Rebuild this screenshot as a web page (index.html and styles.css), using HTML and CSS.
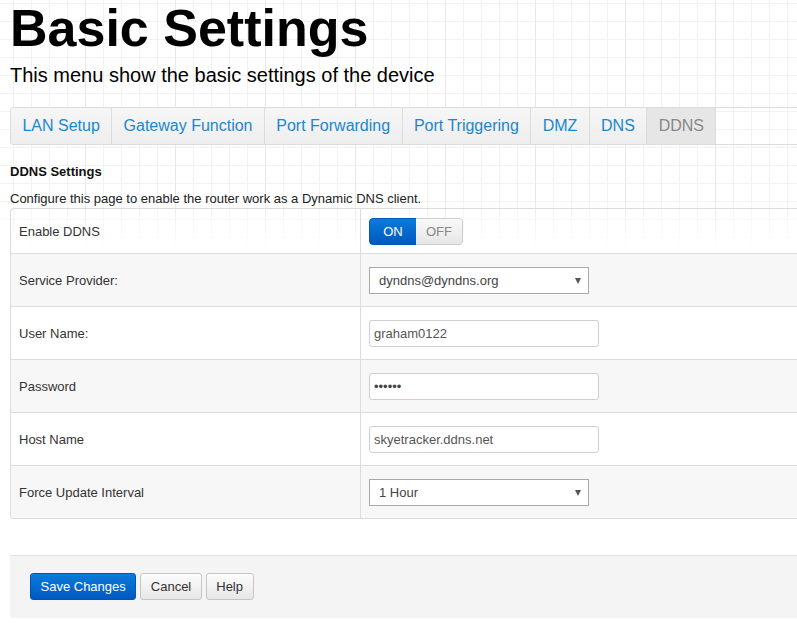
FILE: index.html
```html
<!DOCTYPE html>
<html lang="en">
<head>
<meta charset="utf-8">
<title>Basic Settings</title>
<link rel="stylesheet" href="styles.css">
</head>
<body>
<div class="page">
  <h1 class="title">Basic Settings</h1>
  <p class="subtitle">This menu show the basic settings of the device</p>
  <ul class="tabs">
    <li class="tab"><a class="tab-link" href="#">LAN Setup</a></li>
    <li class="tab"><a class="tab-link" href="#">Gateway Function</a></li>
    <li class="tab"><a class="tab-link" href="#">Port Forwarding</a></li>
    <li class="tab"><a class="tab-link" href="#">Port Triggering</a></li>
    <li class="tab"><a class="tab-link" href="#">DMZ</a></li>
    <li class="tab"><a class="tab-link" href="#">DNS</a></li>
    <li class="tab active"><a class="tab-link" href="#">DDNS</a></li>
  </ul>
  <h2 class="section-title">DDNS Settings</h2>
  <p class="section-desc">Configure this page to enable the router work as a Dynamic DNS client.</p>
  <div class="form-table">
    <div class="row first">
      <div class="label">Enable DDNS</div>
      <div class="control">
        <div class="switch"><span class="switch-on">ON</span><span class="switch-off">OFF</span></div>
      </div>
    </div>
    <div class="row alt">
      <div class="label">Service Provider:</div>
      <div class="control">
        <div class="select"><select class="select-box"><option>dyndns@dyndns.org</option></select></div>
      </div>
    </div>
    <div class="row">
      <div class="label">User Name:</div>
      <div class="control"><input class="input" type="text" value="graham0122"></div>
    </div>
    <div class="row alt">
      <div class="label">Password</div>
      <div class="control"><input class="input input-pass" type="text" value="••••••"></div>
    </div>
    <div class="row">
      <div class="label">Host Name</div>
      <div class="control"><input class="input" type="text" value="skyetracker.ddns.net"></div>
    </div>
    <div class="row alt">
      <div class="label">Force Update Interval</div>
      <div class="control">
        <div class="select"><select class="select-box"><option>1 Hour</option></select></div>
      </div>
    </div>
  </div>
  <div class="actions">
    <button class="btn btn-primary" type="button">Save Changes</button>
    <button class="btn" type="button">Cancel</button>
    <button class="btn" type="button">Help</button>
  </div>
</div>
</body>
</html>
```
FILE: styles.css
```css
html {
  margin: 0;
  min-height: 100%;
  background-color: #fff;
  background-image:
    linear-gradient(to bottom, rgba(255,255,255,0) 200px, #fff 250px),
    linear-gradient(to right, #e8e8e8 1px, transparent 1px),
    linear-gradient(to right, #f2f2f2 1px, transparent 1px),
    linear-gradient(to bottom, #f2f2f2 1px, transparent 1px);
  background-size: 100% 100%, 90px 100%, 18px 18px, 18px 18px;
  background-position: 0 0, 85px 0, 13px 3px, 13px 3px;
  background-repeat: no-repeat, repeat-x, repeat, repeat;
}

body {
  margin: 0;
  overflow: hidden;
  font-family: "Liberation Sans", Arial, sans-serif;
  color: #333;
}

.page {
  width: 800px;
  padding-left: 10px;
}

.title {
  margin: 0;
  font-size: 52px;
  line-height: 56px;
  font-weight: bold;
  color: #000;
}

.subtitle {
  margin: 7px 0 0;
  font-size: 20px;
  line-height: 24px;
  color: #000;
}

.tabs {
  margin: 20px 0 0;
  padding: 0;
  list-style: none;
  display: flex;
  border-top: 1px solid #dcdcdc;
  border-bottom: 1px solid #dcdcdc;
  border-left: 1px solid #dcdcdc;
  border-radius: 4px 0 0 4px;
}

.tab {
  border-right: 1px solid #dcdcdc;
  background: linear-gradient(#f6f6f6, #eeeeee);
}

.tab:first-child {
  border-radius: 3px 0 0 3px;
}

.tab-link {
  display: block;
  padding: 8px 11.4px;
  font-size: 16px;
  line-height: 20px;
  color: #1a87d0;
  text-decoration: none;
}

.tab.active {
  background: #e6e6e6;
}

.tab.active .tab-link {
  color: #888;
}

.section-title {
  margin: 19px 0 0;
  font-size: 13px;
  line-height: 16px;
  font-weight: bold;
  color: #111;
}

.section-desc {
  margin: 11px 0 0;
  font-size: 13px;
  line-height: 16px;
  color: #222;
}

.form-table {
  margin-top: 1px;
  border: 1px solid #dcdcdc;
  border-right: none;
  border-radius: 4px 0 0 4px;
}

.row {
  display: grid;
  grid-template-columns: 350px 1fr;
  height: 53px;
  box-sizing: border-box;
  border-top: 1px solid #dcdcdc;
}

.row.first {
  border-top: none;
  height: 44px;
}

.row.alt {
  background: #f7f7f7;
}

.row:last-child {
  border-radius: 0 0 0 3px;
}

.label {
  display: flex;
  align-items: center;
  box-sizing: border-box;
  padding-left: 8px;
  border-right: 1px solid #dcdcdc;
  font-size: 13px;
  color: #333;
}

.control {
  display: flex;
  align-items: center;
  padding-left: 8px;
}

.switch {
  display: flex;
  height: 27px;
  border-radius: 4px;
  overflow: hidden;
  font-size: 13px;
}

.switch-on,
.switch-off {
  width: 47px;
  box-sizing: border-box;
  display: flex;
  align-items: center;
  justify-content: center;
}

.switch-on {
  background: linear-gradient(#0b7bd9, #0058c1);
  border: 1px solid #0058bd;
  border-right: none;
  border-radius: 4px 0 0 4px;
  color: #fff;
}

.switch-off {
  background: linear-gradient(#f9f9f9, #e6e6e6);
  border: 1px solid #cdcdcd;
  border-left: none;
  border-radius: 0 4px 4px 0;
  color: #888;
}

.select {
  position: relative;
  width: 220px;
}

.select::after {
  content: "";
  position: absolute;
  right: 8px;
  top: 11px;
  border-left: 3.5px solid transparent;
  border-right: 3.5px solid transparent;
  border-top: 6px solid #555;
}

.select-box {
  -webkit-appearance: none;
  appearance: none;
  display: block;
  width: 100%;
  height: 27px;
  margin: 0;
  border: 1px solid #a9a9a9;
  border-radius: 0;
  background: #fff;
  padding: 0 0 0 9px;
  font-family: "Liberation Sans", Arial, sans-serif;
  font-size: 13px;
  color: #444;
}

.input {
  display: block;
  width: 230px;
  height: 27px;
  margin: 0;
  box-sizing: border-box;
  border: 1px solid #cfcfcf;
  border-radius: 3px;
  padding: 0 4px;
  background: #fff;
  font-family: "Liberation Sans", Arial, sans-serif;
  font-size: 13px;
  color: #555;
}

.input-pass {
  color: #444;
}

.actions {
  margin-top: 36px;
  display: flex;
  gap: 4px;
  padding: 17px 20px 18px;
  background: #f4f4f4;
  border-top: 1px solid #e2e2e2;
}

.btn {
  height: 27px;
  margin: 0;
  padding: 0 9.5px;
  box-sizing: border-box;
  border: 1px solid #c6c6c6;
  border-radius: 3px;
  background: linear-gradient(#fdfdfd, #e6e6e6);
  font-family: "Liberation Sans", Arial, sans-serif;
  font-size: 13px;
  line-height: 15px;
  color: #333;
}

.btn-primary {
  background: linear-gradient(#0b7bd9, #0058c1);
  border-color: #0055b8;
  color: #fff;
}
```
